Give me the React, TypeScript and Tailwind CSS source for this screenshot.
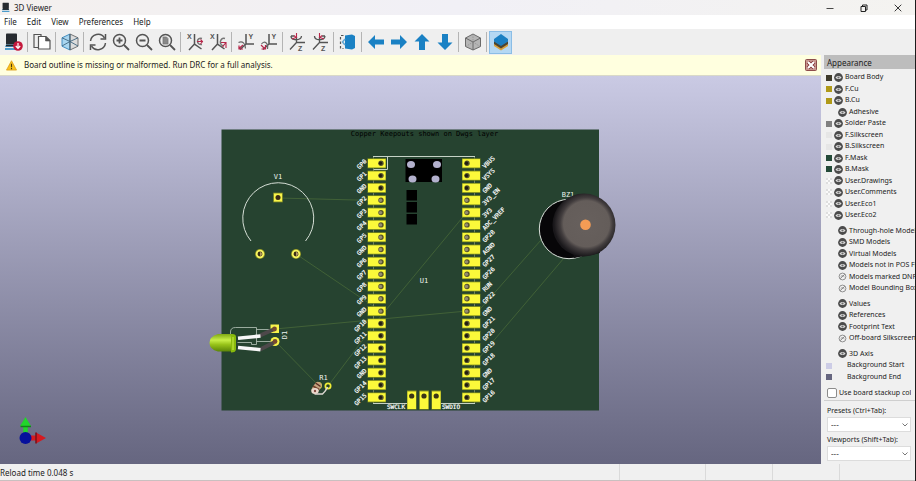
import type { ReactNode } from "react";

const LEFT_PINS = ["GP0", "GP1", "GND", "GP2", "GP3", "GP4", "GP5", "GND", "GP6", "GP7", "GP8", "GP9", "GND", "GP10", "GP11", "GP12", "GP13", "GND", "GP14", "GP15"];
const RIGHT_PINS = ["VBUS", "VSYS", "GND", "3V3_EN", "3V3", "ADC_VREF", "GP28", "AGND", "GP27", "GP26", "RUN", "GP22", "GND", "GP21", "GP20", "GP19", "GP18", "GND", "GP17", "GP16"];

type Row = { label: string; swatch?: string; eye?: "on" | "off"; indent?: boolean };

const LAYERS: Row[] = [
  { label: "Board Body", swatch: "bg-[#3f3b2c]", eye: "on" },
  { label: "F.Cu", swatch: "bg-[#b09a18]", eye: "on" },
  { label: "B.Cu", swatch: "bg-[#b09a18]", eye: "on" },
  { label: "Adhesive", eye: "on", indent: true },
  { label: "Solder Paste", swatch: "bg-[#808080]", eye: "on" },
  { label: "F.Silkscreen", swatch: "bg-[#e6e6e6]", eye: "on" },
  { label: "B.Silkscreen", swatch: "bg-[#e6e6e6]", eye: "on" },
  { label: "F.Mask", swatch: "bg-[#244a38]", eye: "on" },
  { label: "B.Mask", swatch: "bg-[#244a38]", eye: "on" },
  { label: "User.Drawings", swatch: "checker", eye: "on" },
  { label: "User.Comments", swatch: "checker", eye: "on" },
  { label: "User.Eco1", swatch: "checker", eye: "on" },
  { label: "User.Eco2", swatch: "checker", eye: "on" },
];
const MODELS: Row[] = [
  { label: "Through-hole Models", eye: "on", indent: true },
  { label: "SMD Models", eye: "on", indent: true },
  { label: "Virtual Models", eye: "on", indent: true },
  { label: "Models not in POS File", eye: "on", indent: true },
  { label: "Models marked DNP", eye: "off", indent: true },
  { label: "Model Bounding Boxes", eye: "off", indent: true },
];
const TEXTS: Row[] = [
  { label: "Values", eye: "on", indent: true },
  { label: "References", eye: "on", indent: true },
  { label: "Footprint Text", eye: "on", indent: true },
  { label: "Off-board Silkscreen", eye: "off", indent: true },
];
const SCENE: Row[] = [
  { label: "3D Axis", eye: "on", indent: true },
  { label: "Background Start", swatch: "bg-[#cccce6]" },
  { label: "Background End", swatch: "bg-[#666680]" },
];

function Eye({ off }: { off?: boolean }) {
  return (
    <svg viewBox="0 0 9 9" className="size-[9px] shrink-0">
      {off ? (
        <g fill="none" stroke="#777" strokeWidth="0.8">
          <circle cx="4.5" cy="4.5" r="3.4" />
          <path d="M2.2 6.800 6.800 2.2M2.6 4.800c1-1.3 2.600-1.500 3.800 0" />
        </g>
      ) : (
        <>
          <circle cx="4.5" cy="4.5" r="4.4" fill="#4c4c4c" />
          <path d="M1.500 4.500c1.500-2 4.500-2 6 0-1.500 2-4.500 2-6 0z" fill="#dedede" />
          <circle cx="4.5" cy="4.5" r="1.1" fill="#6c6c6c" />
        </>
      )}
    </svg>
  );
}

function Group({ rows, height }: { rows: Row[]; height: string }) {
  return (
    <ul className={"flex flex-col " + height}>
      {rows.map((r) => (
        <li key={r.label} className="flex flex-1 items-center whitespace-nowrap pl-[2px]">
          {r.swatch === "checker" ? (
            <svg viewBox="0 0 6 6" className="size-[6px] shrink-0">
              <rect width="6" height="6" fill="#fafafa" />
              <path d="M0 0h2v2H0zM4 0h2v2H4zM2 2h2v2H2zM0 4h2v2H0zM4 4h2v2H4z" fill="#dedede" />
            </svg>
          ) : r.swatch ? (
            <span className={"size-[6px] shrink-0 " + r.swatch} />
          ) : (
            <span className="w-[6px] shrink-0" />
          )}
          {r.eye ? (
            <button aria-label={"Toggle " + r.label} className={r.indent ? "ml-[6px] mr-[2px]" : "mx-[2px]"}>
              <Eye off={r.eye === "off"} />
            </button>
          ) : (
            <span className="w-[15px] shrink-0" />
          )}
          <span>{r.label}</span>
        </li>
      ))}
    </ul>
  );
}

function Tool({ label, active, children }: { label: string; active?: boolean; children: ReactNode }) {
  return (
    <button
      aria-label={label}
      className={"flex h-[23px] w-[23px] shrink-0 items-center justify-center " + (active ? "border border-[#8abde6] bg-[#b5d8f3]" : "")}
    >
      <svg viewBox="0 0 18 18" className="size-[18px] shrink-0" fill="none" stroke="#545454" strokeWidth="1.5">
        {children}
      </svg>
    </button>
  );
}

function Sep() {
  return <span className="mx-[2px] h-[20px] w-px shrink-0 bg-[#b4b4b4]" />;
}

const letter = { stroke: "none", fill: "#545454", fontSize: 7, fontFamily: "Liberation Sans, sans-serif", fontWeight: 700 };

function BoardIcon() {
  return (
    <>
      <rect x="1" y="0.5" width="11" height="11" rx="0.8" fill="#272b30" stroke="none" />
      <path d="M1 11.500h11L13 14H0zM0 15h13v2H0z" fill="#4e9ccb" stroke="none" />
      <path d="M1 12.500h11" stroke="#20242a" strokeWidth="1.6" />
    </>
  );
}

function Toolbar() {
  const blue = { fill: "#1a81c4", stroke: "none" };
  return (
    <div role="toolbar" aria-label="3D view" className="flex h-[26px] items-center bg-[#efefef] pl-[2px]">
      <Tool label="Reload board">
        <BoardIcon />
        <circle cx="13" cy="13" r="4.8" fill="#c4183c" stroke="none" />
        <path d="M13 10v5M10.800 13l2.200 2.400 2.200-2.400" stroke="#fff" strokeWidth="1.2" />
      </Tool>
      <Sep />
      <Tool label="Copy image">
        <path d="M5 14.500H1V1.500h7V4" strokeWidth="1.2" />
        <path d="M5.500 3.500h7.500l4 4v8.500H5.500z" fill="#fff" strokeWidth="1.2" />
        <path d="M12.500 3.500v4.500H17z" fill="#545454" strokeWidth="0.6" />
      </Tool>
      <Sep />
      <Tool label="Raytracing">
        <path d="M9 1 1 4.800v8.400L9 17z" fill="#a9d6f0" stroke="#3587bd" strokeWidth="0.9" />
        <path d="M9 1l8 3.800v8.400L9 17z" fill="#dcdcdc" stroke="#666" strokeWidth="0.9" />
        <path d="M1 4.800 9 8.500l8-3.700M9 1v16M1 13l8-4.500 8 4.500" stroke="#3f6680" strokeWidth="0.9" />
      </Tool>
      <Sep />
      <Tool label="Refresh">
        <path d="M1.500 8A7.600 7.600 0 0 1 15.500 5M16.500 10A7.600 7.600 0 0 1 2.500 13" />
        <path d="M16.500 1v5h-5M1.500 17v-5h5" />
      </Tool>
      <Tool label="Zoom in">
        <circle cx="7.500" cy="7.500" r="6" />
        <path d="m12 12 5 5M7.500 4.500v6M4.500 7.500h6" strokeWidth="1.8" />
      </Tool>
      <Tool label="Zoom out">
        <circle cx="7.500" cy="7.500" r="6" />
        <path d="m12 12 5 5M4.500 7.500h6" strokeWidth="1.8" />
      </Tool>
      <Tool label="Zoom to fit">
        <circle cx="7.500" cy="7.500" r="6" />
        <path d="m12 12 5 5" strokeWidth="1.8" />
        <path d="M5 4h3.500L10 5.500V11H5z" fill="#888" stroke="#777" strokeWidth="0.800" />
      </Tool>
      <Sep />
      <Tool label="Rotate X clockwise">
        <text x="1" y="6" {...letter}>X</text>
        <path d="M8.500 1v10l7 5M8.500 11 3 17" />
        <path d="M16 5.500c-6-1.500-6 7 0 6" stroke="#777" />
        <path d="M11 8.500h6M14.500 6.500l2 2-2 2.500" stroke="#b7274a" strokeWidth="1.1" />
      </Tool>
      <Tool label="Rotate X counterclockwise">
        <text x="1" y="6" {...letter}>X</text>
        <path d="M8.500 1v10l7 5M8.500 11 3 17" />
        <path d="M16 5.500c-6-1.500-6 8-1 7" stroke="#777" />
        <path d="M12 9.500h5V15M16.500 10l-3 4" stroke="#b7274a" strokeWidth="1.1" />
      </Tool>
      <Sep />
      <Tool label="Rotate Y clockwise">
        <text x="11.500" y="6" {...letter}>Y</text>
        <path d="M9 1v10h8M9 11l-6 5.500" />
        <path d="M1.500 9.500c4-2 7 1 7 6" stroke="#666" strokeWidth="1.2" />
        <path d="m6 12-4.500 4M2 12.500V16h4" stroke="#b7274a" strokeWidth="1.2" />
      </Tool>
      <Tool label="Rotate Y counterclockwise">
        <text x="11.500" y="6" {...letter}>Y</text>
        <path d="M9 1v10h8M9 11l-6 5.500" />
        <path d="M1.500 11c3-4 7-1 6 5" stroke="#666" strokeWidth="1.2" />
        <path d="m1 12 4 4M1.500 16H5.500v-4" stroke="#b7274a" strokeWidth="1.2" />
      </Tool>
      <Sep />
      <Tool label="Rotate Z clockwise">
        <text x="10" y="17.500" {...letter}>Z</text>
        <path d="M8.500 4v5.500M17 9.500H8.500L2 16.500M3 3c0 5 10 5 10.500 0M3 3h3" strokeWidth="1.3" />
        <path d="M8.500 0v5M4 6l4-1.500L6 2.500" stroke="#b7274a" strokeWidth="1.1" />
      </Tool>
      <Tool label="Rotate Z counterclockwise">
        <text x="10" y="17.500" {...letter}>Z</text>
        <path d="M8.500 4v5.500M17 9.500H8.500L2 16.500M3.500 3c0 5 10 5 10.500 0M11 3h3" strokeWidth="1.3" />
        <path d="M8.500 0v5M13 6 9 4.500l2-2" stroke="#b7274a" strokeWidth="1.1" />
      </Tool>
      <Sep />
      <Tool label="Flip board">
        <path d="M6 2.500 13 1.500 16 3v12l-3 1.500-7-1z" {...blue} />
        <path d="M4.500 2.500h-3v13h3" strokeDasharray="2.500 2" strokeWidth="1.2" />
        <path d="M6 6 3.500 9 6 12" stroke="#63a8d4" />
      </Tool>
      <Sep />
      <Tool label="Pan left"><path d="M1 9 8 2v4.500h9v5H8V16z" {...blue} /></Tool>
      <Tool label="Pan right"><path d="M17 9l-7-7v4.500H1v5h9V16z" {...blue} /></Tool>
      <Tool label="Pan up"><path d="M9 1 1.500 8.500h4.500V17h6V8.500h4.500z" {...blue} /></Tool>
      <Tool label="Pan down"><path d="M9 17l7.500-7.500H12V1H6v8.500H1.500z" {...blue} /></Tool>
      <Sep />
      <Tool label="Orthographic projection">
        <path d="M9 1 1.500 5v8.500L9 17l7.500-3.500V5z" fill="#b5b5b5" stroke="#6a6a6a" strokeWidth="1" />
        <path d="M1.500 5 9 9l7.500-4M9 9v8" stroke="#6a6a6a" strokeWidth="1" />
        <path d="M9 1v8l-7 4.500M9 9l7 4.500" stroke="#858585" strokeWidth="0.6" strokeDasharray="1.5 1" />
      </Tool>
      <Sep />
      <Tool label="Appearance manager" active>
        <path d="m2 10 7 4 7-4v3l-7 4.500L2 13z" fill="#d9a13c" stroke="none" />
        <path d="m2 8 7 4 7-4v3l-7 4.500L2 11z" fill="#4c4532" stroke="none" />
        <path d="m9 1 7 5v2.500L9 13 2 8.500V6z" fill="#1a7fc2" stroke="none" />
      </Tool>
    </div>
  );
}

function Pad({ x, y, hx }: { x: number; y: number; hx: number }) {
  return (
    <g>
      <rect x={x - 0.5} y={y - 5} width="18.5" height="10" fill="#7c8a1c" />
      <rect x={x} y={y - 4.2} width="17.5" height="8.4" fill="#fbf93a" />
      <circle cx={hx} cy={y} r="2.7" fill="#57532e" />
      <circle cx={hx - 0.5} cy={y} r="1.7" fill={y > 200 && y < 315 ? "#948c70" : "#211d10"} />
    </g>
  );
}

function RoundPad({ x, y }: { x: number; y: number }) {
  return (
    <g>
      <circle cx={x} cy={y} r="5" fill="#8d9426" />
      <circle cx={x} cy={y} r="4.2" fill="#f8f560" />
      <circle cx={x} cy={y} r="2.4" fill="#3a2e16" />
      <path d={`M${x} ${y - 2}a2 2 0 0 1 0 4z`} fill="#b39a63" />
    </g>
  );
}

function Scene() {
  const pinY = (i: number) => 163.3 + i * 12.32;
  return (
    <svg viewBox="0 76 821 388" preserveAspectRatio="xMidYMid meet" className="block h-full w-full" fontFamily="'DejaVu Sans Mono', 'Liberation Mono', monospace" role="img" aria-label="3D board">
      <defs>
        <radialGradient id="cap" cx="0.54" cy="0.48" r="0.52">
          <stop offset="0" stopColor="#67605d" />
          <stop offset="0.7" stopColor="#645d5a" />
          <stop offset="0.8" stopColor="#423d3e" />
          <stop offset="1" stopColor="#19171a" />
        </radialGradient>
        <linearGradient id="led" x1="0" y1="0" x2="0" y2="1">
          <stop offset="0" stopColor="#7fa814" />
          <stop offset="0.35" stopColor="#c8ee48" />
          <stop offset="0.6" stopColor="#98c31a" />
          <stop offset="1" stopColor="#5c8508" />
        </linearGradient>
      </defs>

      <rect x="221.5" y="129.5" width="377.5" height="281" fill="#264330" />

      <g stroke="#486838" strokeWidth="0.8" fill="none">
        <path d="M278 198 376 200.500M296 254l80 54M275 329l192-18M275 341l43 44M328 386l53-70 86-104M541 240l-74 84M564 258l-97 114" />
      </g>

      <text x="424.5" y="136" textAnchor="middle" fontSize="7" fill="#000">Copper Keepouts shown on Dwgs layer</text>

      <g stroke="#c6d2c6" strokeWidth="1" fill="none">
        <path d="M373 156.500h102M387.500 156.500V169.500H373M373 403.500h34M441 403.500h34" />
        <path d="M373.500 157v246M474.500 157v246" stroke="#81916d" strokeWidth="0.8" />
      </g>

      {LEFT_PINS.map((name, i) => (
        <g key={"l" + i}>
          <Pad x={368} y={pinY(i)} hx={381} />
          <text transform={`translate(367 ${pinY(i) - 1.5}) rotate(-45)`} textAnchor="end" fontSize="6" fill="#fff" stroke="#fff" strokeWidth="0.2">{name}</text>
        </g>
      ))}
      {RIGHT_PINS.map((name, i) => (
        <g key={"r" + i}>
          <Pad x={462.5} y={pinY(i)} hx={467} />
          <text transform={`translate(485 ${pinY(i) + 5.5}) rotate(-45)`} fontSize="6" fill="#fff" stroke="#fff" strokeWidth="0.2">{name}</text>
        </g>
      ))}

      <rect x="405.5" y="159" width="36.5" height="23" fill="#000" />
      {[[411, 164.5], [437, 164.5], [412.5, 179], [435.5, 179]].map(([x, y]) => (
        <ellipse key={x} cx={x} cy={y} rx="4" ry="3.5" fill="#b3b1cd" />
      ))}
      {[190, 202, 214].map((y) => (
        <rect key={y} x="406.5" y={y} width="10.5" height="10.5" fill="#000" />
      ))}
      <text x="424" y="283" textAnchor="middle" fontSize="7" fill="#eef4ee">U1</text>

      {[407.5, 419.8, 432].map((x) => (
        <g key={x}>
          <rect x={x - 0.5} y="390.5" width="9.5" height="19" fill="#8c9420" />
          <rect x={x} y="391.5" width="8.5" height="17.5" fill="#fbf93a" />
          <circle cx={x + 4.2} cy="396" r="2.6" fill="#3a3517" />
        </g>
      ))}
      <text x="405" y="409" textAnchor="end" fontSize="6" fill="#fff" stroke="#fff" strokeWidth="0.2">SWCLK</text>
      <text x="442" y="409" fontSize="6" fill="#fff" stroke="#fff" strokeWidth="0.2">SWDIO</text>

      <text x="278" y="179" textAnchor="middle" fontSize="7" fill="#eef4ee">V1</text>
      <path d="M251 241A35.500 35.500 0 1 1 305.500 241" fill="none" stroke="#d5ded5" strokeWidth="1" />
      <rect x="273.2" y="192.7" width="9.6" height="9.6" fill="#8d9426" />
      <rect x="274" y="193.5" width="8" height="8" fill="#f8f44a" />
      <circle cx="278" cy="197.5" r="2.5" fill="#3b2b16" />
      <RoundPad x={260} y={254} />
      <RoundPad x={296} y={254} />

      <path d="M230.500 336v-4q0-4.500 5-4.500h21v17h-5v-2h-14M256.500 329.500H272M256.500 341.500h14" fill="none" stroke="#b9c7bb" strokeWidth="0.8" />
      <rect x="270.5" y="324.500" width="8.5" height="8.5" fill="#f8f44a" />
      <circle cx="275" cy="341.5" r="4.5" fill="#f8f44a" />
      <path d="m260 335.500 13.500-6M260 349.500l14-7" stroke="#4d484a" strokeWidth="4" />
      <circle cx="274.5" cy="329" r="2.4" fill="#764a31" />
      <circle cx="275" cy="341.5" r="2.4" fill="#764a31" />
      <path d="m238 338.200 22.500-2.200M238 347.500l22.500 2.200" stroke="#f7f7f7" strokeWidth="3.600" />
      <path d="M218 334h13l2 1v16l-2 .5h-13q-8.500-2-8.500-8.500t8.500-9z" fill="url(#led)" />
      <path d="M231 334q5-.5 5 3v12q0 3.500-5 3.500z" fill="#88ba0c" />
      <path d="M233 337v13" stroke="#b4dc35" strokeWidth="1.5" />
      <text transform="translate(287 335) rotate(-90)" textAnchor="middle" fontSize="7" fill="#eef4ee">D1</text>

      <text x="323.5" y="379.5" textAnchor="middle" fontSize="7" fill="#eef4ee">R1</text>
      <circle cx="318.500" cy="385.500" r="3.500" fill="#d8d535" />
      <circle cx="328" cy="386" r="3.5" fill="#f0ee35" />
      <circle cx="328" cy="386" r="1.8" fill="#294125" />
      <path d="M327.500 387q-2 4.500-5 7h-8" stroke="#ddd8d2" strokeWidth="1.6" fill="none" />
      <path d="m315 390 3-4.500" stroke="#c4a37e" strokeWidth="7" strokeLinecap="round" />
      <path d="m313 386 6 3.500" stroke="#74412c" strokeWidth="1.6" />
      <path d="m315.500 383 5 3.500" stroke="#5b2b20" strokeWidth="1.400" />
      <ellipse cx="315" cy="391" rx="3.7" ry="3" fill="#ead8cc" />
      <circle cx="315" cy="391" r="1.2" fill="#854c42" />

      <text x="568" y="197" textAnchor="middle" fontSize="7" fill="#eef4ee">BZ1</text>
      <circle cx="569" cy="229" r="29.7" fill="#070608" stroke="#dce2dc" strokeWidth="1" />
      <path d="M565 201 580 194 600 253 574 258z" fill="#121013" />
      <circle cx="584" cy="225" r="31.500" fill="url(#cap)" />
      <circle cx="585.5" cy="224.7" r="5.3" fill="#f49c55" />

      <path d="M30 435.500h6v-3l10 5.500-10 5.500v-3h-6z" fill="#d51a20" />
      <path d="M36 432.500v11" stroke="#761019" strokeWidth="1.5" />
      <path d="M23.200 434v-8h-3.200l5.500-9 5.500 9h-3.200v8z" fill="#22d52b" />
      <path d="M20.500 426.500h10.500" stroke="#15801b" strokeWidth="1.5" />
      <circle cx="25.5" cy="438" r="6" fill="#07109c" />
    </svg>
  );
}

function Picker({ id, label }: { id: string; label: string }) {
  return (
    <div className="flex flex-col px-[3px]">
      <label htmlFor={id} className="h-[13px] leading-[14px]">{label}</label>
      <div className="relative h-[15px] w-[84px]">
        <select id={id} className="h-full w-full appearance-none border border-[#dcdcdc] bg-white pl-[3px] text-[8px] leading-[12px] text-[#444]">
          <option>---</option>
        </select>
        <svg viewBox="0 0 6 4" className="pointer-events-none absolute right-[3px] top-[6px] h-[4px] w-[6px]" fill="none" stroke="#777">
          <path d="m0.500 0.500 2.500 2.500 2.500-2.500" />
        </svg>
      </div>
    </div>
  );
}

export default function App() {
  return (
    <div className="flex h-screen min-h-[481px] flex-col overflow-hidden border-r border-[#1c1c1c] bg-[#f0f0f0] font-['Noto_Sans','Open_Sans',sans-serif] text-[8px] text-[#222]">
      <header className="flex h-[15px] items-center justify-between bg-gradient-to-r from-[#f4f0ee] via-[#f1f0f6] to-[#f4f3f0] pl-[2px]">
        <div className="flex items-center gap-[4px]">
          <svg viewBox="0 0 14 18" className="h-[11px] w-[8px]"><BoardIcon /></svg>
          <h1>3D Viewer</h1>
        </div>
        <div className="flex">
          <button aria-label="Minimize" className="flex h-[15px] w-[34px] items-center justify-center">
            <svg viewBox="0 0 8 8" className="size-[8px]" stroke="#333" strokeWidth="0.9"><path d="M0.500 4.500h7" /></svg>
          </button>
          <button aria-label="Restore" className="flex h-[15px] w-[34px] items-center justify-center">
            <svg viewBox="0 0 8 8" className="size-[8px]" fill="none" stroke="#222" strokeWidth="1"><path d="M1 2.500h4.500v5H1zM2.500 2.500V1H7v5H5.500" /></svg>
          </button>
          <button aria-label="Close" className="flex h-[15px] w-[34px] items-center justify-center">
            <svg viewBox="0 0 8 8" className="size-[8px]" stroke="#222" strokeWidth="0.9"><path d="m0.700 0.700 6.600 6.600M7.300 0.700.7 7.300" /></svg>
          </button>
        </div>
      </header>

      <nav className="flex h-[14px] items-center gap-[10px] bg-white pl-[4px] leading-[14px]">
        {["File", "Edit", "View", "Preferences", "Help"].map((m) => (
          <button key={m}>{m}</button>
        ))}
      </nav>

      <Toolbar />

      <div className="flex min-h-0 flex-1">
        <main className="flex min-w-0 flex-1 flex-col">
          <div className="flex h-[21px] shrink-0 items-center border-b border-[#d9d9c8] bg-[#ffffdf] pl-[6px] pr-[4px]">
            <svg viewBox="0 0 12 12" className="size-[11px]">
              <path d="M6 .8 11.500 11H.5z" fill="#f8c21c" stroke="#dc9a18" strokeWidth="0.8" strokeLinejoin="round" />
              <path d="M6 4v3.800M6 8.800V10" stroke="#4a3a10" strokeWidth="1.2" />
            </svg>
            <p className="ml-[7px] flex-1">Board outline is missing or malformed. Run DRC for a full analysis.</p>
            <button aria-label="Dismiss">
              <svg viewBox="0 0 12 12" className="size-[12px]">
                <rect x="0.5" y="0.5" width="11" height="11" rx="1" fill="#c99790" stroke="#8d4c4b" />
                <path d="m3 3 6 6M9 3 3 9" stroke="#79282c" strokeWidth="3.8" />
                <path d="m3 3 6 6M9 3 3 9" stroke="#fff" strokeWidth="2.2" />
              </svg>
            </button>
          </div>
          <div className="min-h-0 flex-1 bg-gradient-to-b from-[#cacae4] to-[#666680]">
            <Scene />
          </div>
        </main>

        <aside className="ml-[3px] flex w-[91px] shrink-0 flex-col overflow-hidden text-[7px]">
          <h2 className="h-[14px] shrink-0 bg-[#bdbdbd] pl-[3px] text-[8px] leading-[15px]">Appearance</h2>
          <div className="flex flex-col gap-[4px] pt-[3px]">
            <Group rows={LAYERS} height="h-[149px]" />
            <Group rows={MODELS} height="h-[69px]" />
            <Group rows={TEXTS} height="h-[46px]" />
            <Group rows={SCENE} height="h-[35px]" />
          </div>
          <label className="mt-[3px] flex h-[15px] shrink-0 items-center gap-[2px] overflow-hidden whitespace-nowrap border-b border-[#cfcfcf] pl-[3px]">
            <input type="checkbox" className="size-[10px] shrink-0 appearance-none rounded-[2px] border border-[#8c8c8c] bg-white" />
            <span className="w-[72px] overflow-hidden">Use board stackup colors</span>
          </label>
          <div className="flex flex-col gap-px pt-[3px]">
            <Picker id="presets" label="Presets (Ctrl+Tab):" />
            <Picker id="viewports" label="Viewports (Shift+Tab):" />
          </div>
        </aside>
      </div>

      <footer className="flex h-[17px] shrink-0 items-stretch border-b border-[#c9c0c0] bg-[#f0f0f0] leading-[18px]">
        <span className="flex-1">Reload time 0.048 s</span>
        <span className="w-[86px] border-l border-[#dadada]" />
        <span className="w-[67px] border-l border-[#dadada]" />
        <span className="w-[67px] border-l border-[#dadada]" />
        <span className="w-[76px] border-l border-[#dadada]" />
      </footer>
    </div>
  );
}
